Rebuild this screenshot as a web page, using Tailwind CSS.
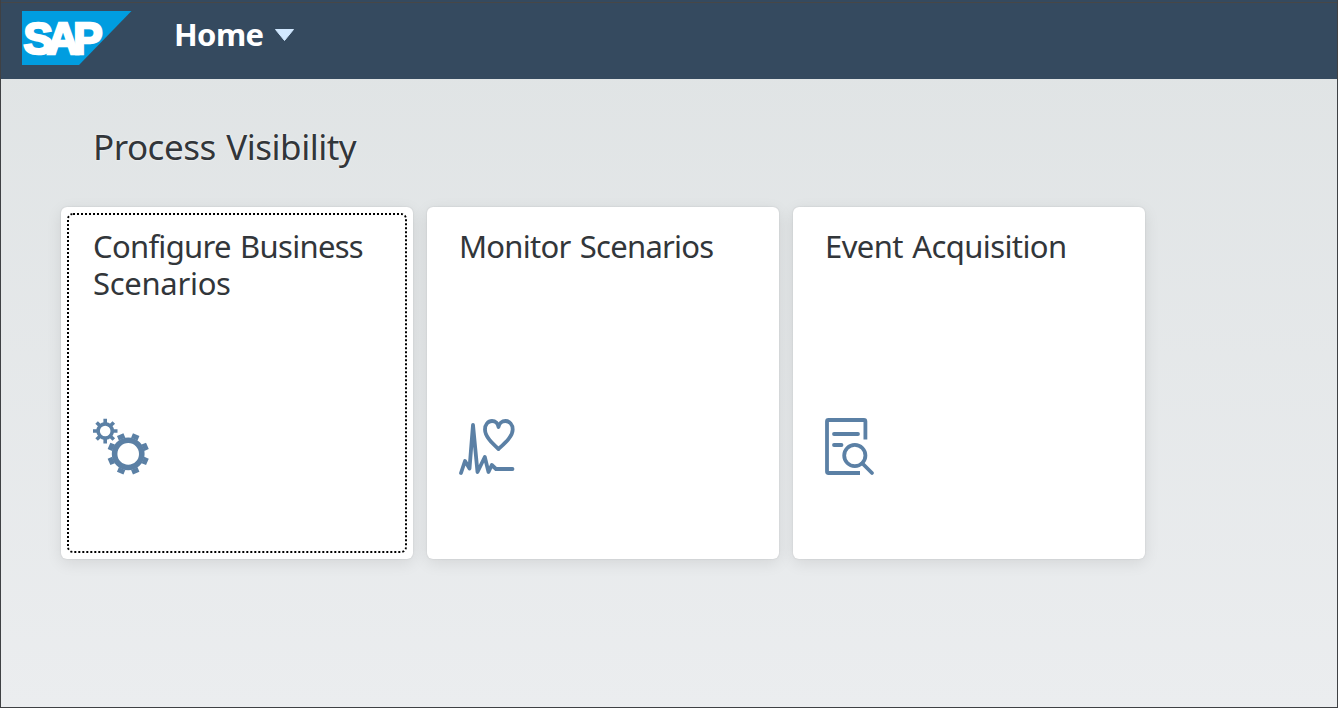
<!DOCTYPE html>
<html lang="en">
<head>
<meta charset="utf-8">
<title>Home</title>
<script src="https://cdn.jsdelivr.net/npm/@tailwindcss/browser@4"></script>
</head>
<body class="w-[1338px] h-[708px] overflow-hidden font-['Noto_Sans',sans-serif] text-[#32363a]">
<div class="w-full h-full flex flex-col border border-t-0 border-[#3f4144] bg-linear-to-b from-[#dfe3e4] to-[#ebedef]">
  <header class="h-[79px] shrink-0 bg-[#354a5f] flex flex-col">
    <div class="h-[3px] shrink-0 border-b border-[#474747]"></div>
    <div class="flex items-start pl-[21px] pt-2">
      <svg class="w-[110px] h-[54px] shrink-0" viewBox="0 0 110 54">
        <path d="M0 0H109.500L57 54H0Z" fill="#009de0"/>
        <text x="1.500" y="43" font-family="Liberation Sans" font-weight="700" font-size="44" fill="#fff" stroke="#fff" stroke-width="2.600" textLength="79" lengthAdjust="spacing">SAP</text>
      </svg>
      <h1 class="ml-[42px] mt-[3px] text-[31px] leading-10 font-bold text-white w-[90px] whitespace-nowrap tracking-[-0.6px]">Home</h1>
      <svg class="ml-[10px] mt-[17px] w-[21px] h-[14px]" viewBox="0 0 21 14"><path d="M1.500 1.500H19.500L10.500 12.500Z" fill="#d1e8ff" stroke="#d1e8ff" stroke-linejoin="round"/></svg>
    </div>
  </header>
  <main class="pl-[60px] pt-[43px]">
    <h2 class="ml-8 h-[85px] text-[35px] leading-[50px] whitespace-nowrap tracking-[-0.5px] [word-spacing:2px] [text-shadow:0_0_2px_#ffffff]">Process Visibility</h2>
    <div class="flex gap-[14px]">
      <section class="w-[352px] h-[352px] rounded-md bg-white p-[6px] shadow-[0_4px_16px_rgba(0,0,0,0.09),0_0_2px_rgba(0,0,0,0.12)]">
        <div class="w-full h-full rounded-md border-2 border-dotted border-black pl-6 pt-[13px] flex flex-col">
          <h3 class="h-[185px] text-[31px] leading-[37px] whitespace-nowrap"><span class="block tracking-[-0.7px] [word-spacing:2px]">Configure Business</span><span class="block tracking-[-0.3px]">Scenarios</span></h3>
          <svg class="w-[60px] h-[64px]" viewBox="93 413 60 64" fill="none" stroke="#5b80a5">
            <circle cx="105.200" cy="431" r="7.100" stroke-width="3.600"/>
            <path stroke-width="3.600" d="M105.200 418.700V424M105.200 438V443.500M93 431H98M112.400 431H117.500M96.600 422.400L100 425.800M110.400 436.200L113.800 439.600M113.800 422.400L110.400 425.800M100 436.200L96.600 439.600"/>
            <circle cx="128.200" cy="453.900" r="13.600" stroke-width="5.600"/>
            <path stroke-width="7" stroke-linejoin="round" d="M134.300 439.200L136.200 434.700M142.900 447.800L147.400 445.900M142.900 460L147.400 461.900M134.300 468.600L136.200 473.100M122.100 468.600L120.200 473.100M113.500 460L109 461.900M113.500 447.800L109 445.900M122.100 439.200L120.200 434.700"/>
          </svg>
        </div>
      </section>
      <section class="w-[352px] h-[352px] rounded-md bg-white pl-8 pt-[21px] shadow-[0_4px_16px_rgba(0,0,0,0.09),0_0_2px_rgba(0,0,0,0.12)]">
        <h3 class="h-[185px] text-[31px] leading-[37px] whitespace-nowrap tracking-[-0.75px] [word-spacing:2px]">Monitor Scenarios</h3>
        <svg class="w-[60px] h-[64px]" viewBox="459 413 60 64" fill="none" stroke="#5b80a5" stroke-width="3.800" stroke-linecap="round" stroke-linejoin="round">
          <path d="M461 473L465 461L469.500 468.500L473 425L477.500 472L484.800 457L488.500 472L491.800 465L496 469H512.500"/>
          <path d="M498.500 449C492 443 485 436.500 485 429.500C485 424.500 488 421 492 421C495.500 421 498 423.500 498.500 427C499 423.500 502 421 505.500 421C509.500 421 512.700 424.500 512.700 429.500C512.700 436.500 505 443 498.500 449Z"/>
        </svg>
      </section>
      <section class="w-[352px] h-[352px] rounded-md bg-white pl-8 pt-[21px] shadow-[0_4px_16px_rgba(0,0,0,0.09),0_0_2px_rgba(0,0,0,0.12)]">
        <h3 class="h-[185px] text-[31px] leading-[37px] whitespace-nowrap tracking-[-0.6px] [word-spacing:2px]">Event Acquisition</h3>
        <svg class="w-[60px] h-[64px]" viewBox="825 413 60 64" fill="none" stroke="#5b80a5" stroke-width="3.800">
          <path d="M865.400 439.500V421.500Q865.400 420 863.900 420H828.500Q827 420 827 421.500V471.500Q827 473 828.500 473H860"/>
          <path d="M834 434H858M834 445H841.500" stroke-linecap="round"/>
          <circle cx="854.800" cy="455.500" r="10.600"/>
          <path d="M862.500 463.500L872 473" stroke-linecap="round"/>
        </svg>
      </section>
    </div>
  </main>
</div>
</body>
</html>
